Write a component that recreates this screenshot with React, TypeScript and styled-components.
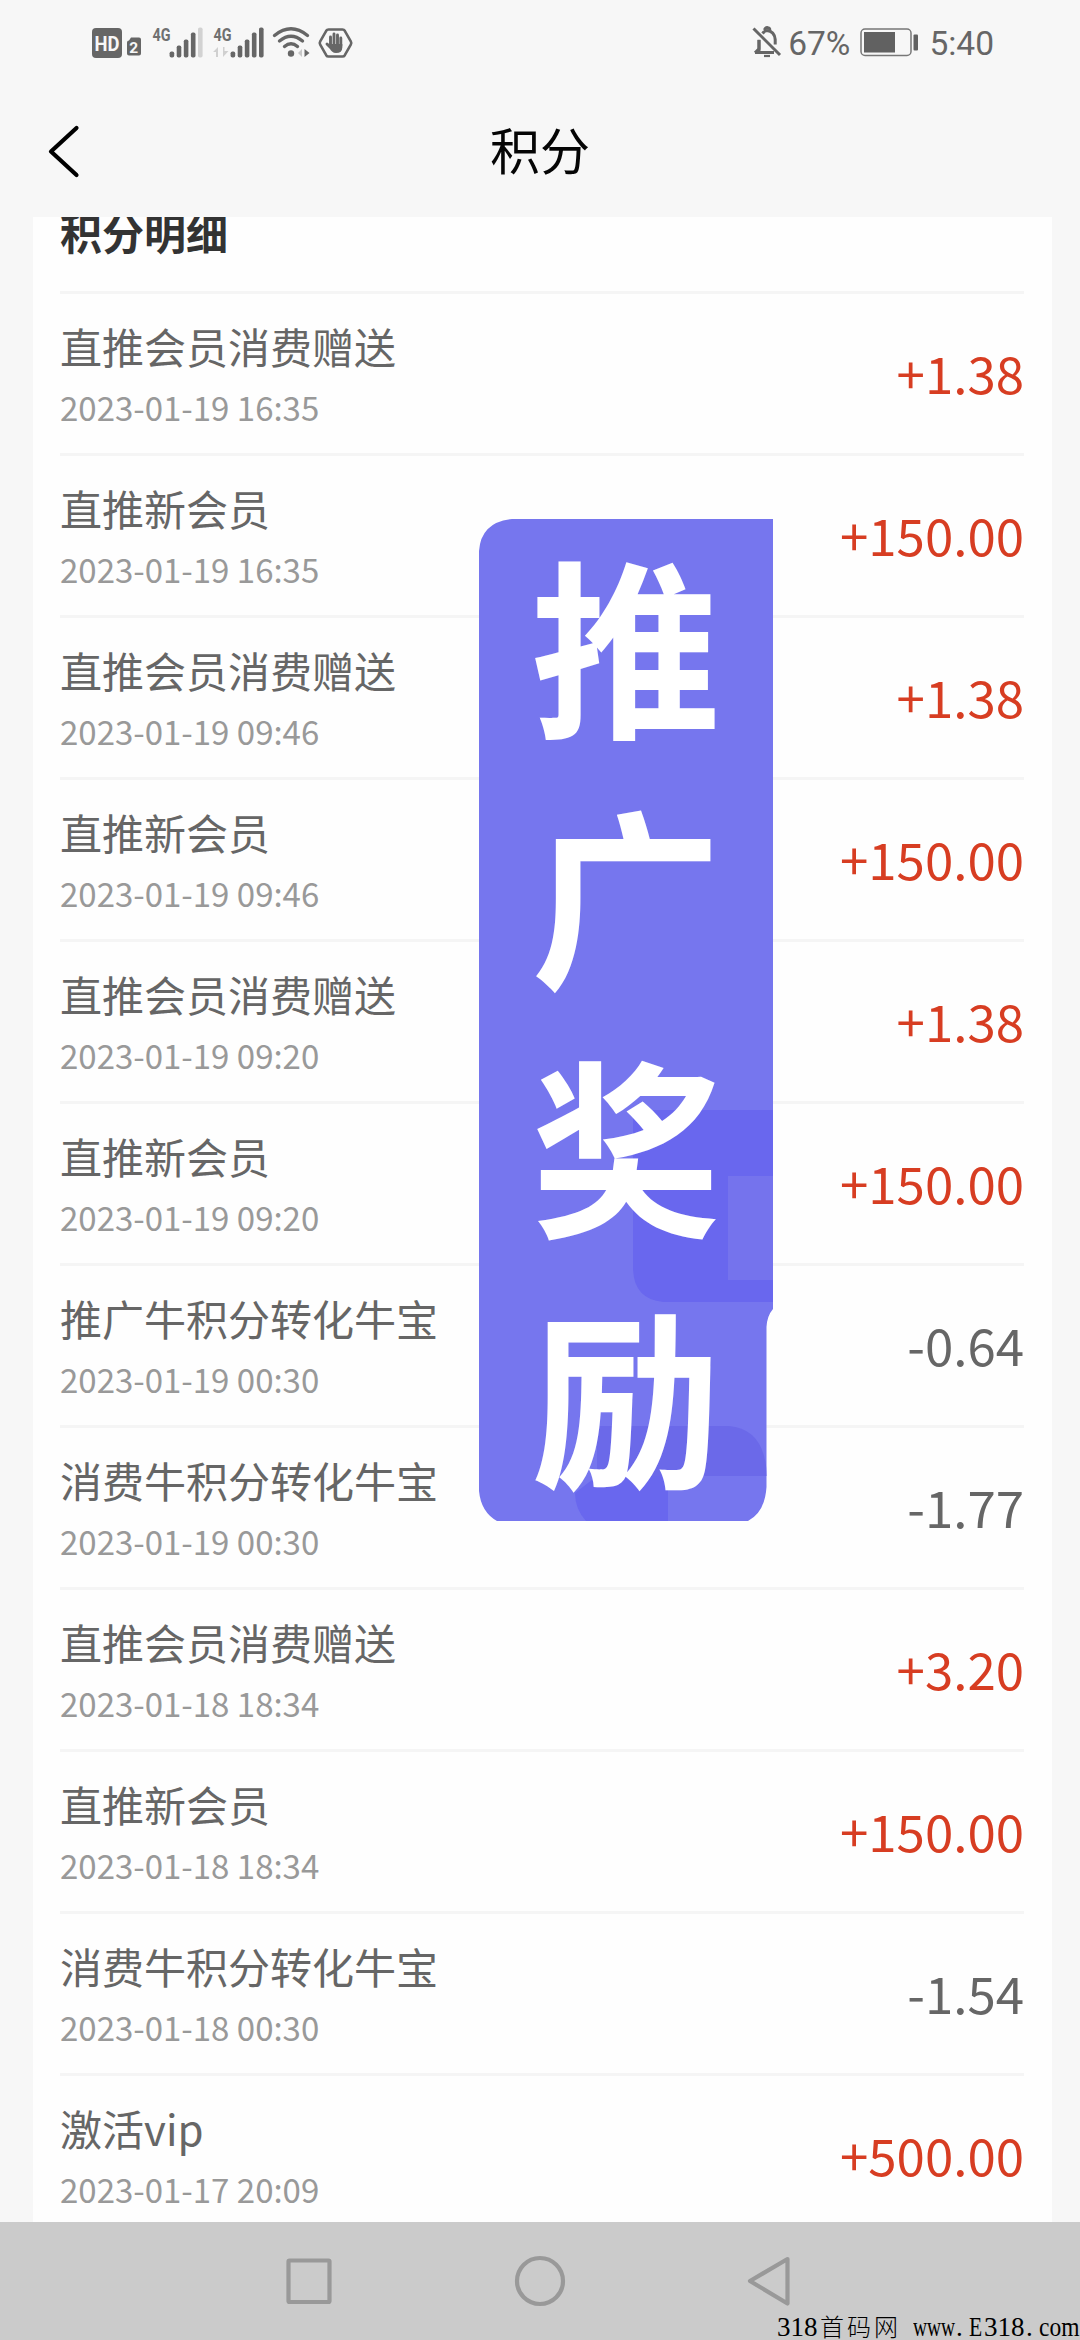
import React from "react";
import styled, { createGlobalStyle } from "styled-components";

const GlobalStyle = createGlobalStyle`
  * { box-sizing: border-box; }
  html, body { margin: 0; padding: 0; background: #f7f7f7; }
  body { font-family: "Noto Sans CJK SC", sans-serif; }
`;

const Screen = styled.div`
  position: relative;
  display: flex;
  flex-direction: column;
  width: 1080px;
  height: 2340px;
  overflow: hidden;
  background: #f7f7f7;
`;

const StatusBar = styled.div`
  display: flex;
  justify-content: space-between;
  height: 86px;
  padding: 15px 86px 0 80px;
  flex: none;
`;

const StatusIcons = styled.svg`
  display: block;
  width: 280px;
  height: 60px;
`;

const StatusRight = styled.div`
  display: flex;
  height: 60px;
  align-items: flex-start;
`;

const StatusText = styled.span<{ $gap: number }>`
  margin-left: ${(p) => p.$gap}px;
  font: 400 33.5px/58px Roboto, sans-serif;
  color: #666;
  white-space: nowrap;
`;

const BellIcon = styled.svg`
  width: 30px;
  height: 60px;
`;

const BatteryIcon = styled.svg`
  width: 58px;
  height: 60px;
  margin-left: 10px;
`;

const NavBar = styled.header`
  display: grid;
  grid-template-columns: 120px 1fr 120px;
  align-items: start;
  height: 131px;
  flex: none;
`;

const BackIcon = styled.svg`
  display: block;
  width: 36px;
  height: 56px;
  margin: 37px 0 0 46px;
`;

const PageTitle = styled.h1`
  margin: 0;
  font-size: 50px;
  line-height: 124px;
  font-weight: 400;
  text-align: center;
  color: #050505;
`;

const Card = styled.main`
  display: flex;
  flex-direction: column;
  flex: 1;
  margin: 0 28px 0 33px;
  padding: 0 28px 0 27px;
  overflow: hidden;
  background: #fefefe;
`;

const SectionTitle = styled.h2`
  margin: -19px 0 0;
  height: 93px;
  font-size: 42px;
  line-height: 68px;
  font-weight: 700;
  color: #333;
  flex: none;
`;

const Row = styled.div`
  display: flex;
  justify-content: space-between;
  align-items: center;
  height: 162px;
  flex: none;
  border-top: 3px solid #f5f5f5;
`;

const RowInfo = styled.div`
  display: flex;
  flex-direction: column;
`;

const RowName = styled.span`
  font-size: 42px;
  line-height: 60px;
  color: #666;
`;

const RowDate = styled.span`
  font-size: 33px;
  line-height: 48px;
  margin-top: 7px;
  color: #999;
`;

const Amount = styled.span<{ $gain: boolean }>`
  font-size: 51px;
  line-height: 74px;
  padding-bottom: 3px;
  color: ${(p) => (p.$gain ? "#d73d22" : "#666")};
`;

const Banner = styled.div`
  position: absolute;
  left: 479px;
  top: 519px;
  width: 294px;
  height: 1002px;
`;

const BannerArt = styled.svg`
  display: block;
  width: 294px;
  height: 1002px;
`;

const BannerText = styled.div`
  position: absolute;
  inset: -3px 0 0;
  display: flex;
  flex-direction: column;
  padding-left: 52px;
`;

const BannerChar = styled.span`
  font-size: 190px;
  line-height: 250px;
  height: 250px;
  font-weight: 700;
  color: #fff;
`;

const SystemBar = styled.footer`
  display: flex;
  justify-content: center;
  height: 118px;
  flex: none;
  background: #cbcbcb;
`;

const SystemIcons = styled.svg`
  display: block;
  width: 600px;
  height: 118px;
`;

const Watermark = styled.div`
  position: absolute;
  left: 777px;
  top: 2314px;
  display: flex;
  height: 26px;
  color: #000;
  white-space: nowrap;
`;

const MarkRun = styled.span<{ $w: number; $sx?: number }>`
  width: ${(p) => p.$w}px;
  font: 400 27px/26px "Liberation Serif", serif;
  transform: scaleX(${(p) => p.$sx ?? 1});
  transform-origin: left center;
`;

const MarkHan = styled.span`
  width: 85px;
  padding-left: 2px;
  font: 300 24px/23px "Noto Sans CJK SC", sans-serif;
  letter-spacing: 3px;
`;

const records: { name: string; date: string; amount: string }[] = [
  { name: "直推会员消费赠送", date: "2023-01-19 16:35", amount: "+1.38" },
  { name: "直推新会员", date: "2023-01-19 16:35", amount: "+150.00" },
  { name: "直推会员消费赠送", date: "2023-01-19 09:46", amount: "+1.38" },
  { name: "直推新会员", date: "2023-01-19 09:46", amount: "+150.00" },
  { name: "直推会员消费赠送", date: "2023-01-19 09:20", amount: "+1.38" },
  { name: "直推新会员", date: "2023-01-19 09:20", amount: "+150.00" },
  { name: "推广牛积分转化牛宝", date: "2023-01-19 00:30", amount: "-0.64" },
  { name: "消费牛积分转化牛宝", date: "2023-01-19 00:30", amount: "-1.77" },
  { name: "直推会员消费赠送", date: "2023-01-18 18:34", amount: "+3.20" },
  { name: "直推新会员", date: "2023-01-18 18:34", amount: "+150.00" },
  { name: "消费牛积分转化牛宝", date: "2023-01-18 00:30", amount: "-1.54" },
  { name: "激活vip", date: "2023-01-17 20:09", amount: "+500.00" },
];

function SignalBars({ x, dimLast }: { x: number; dimLast?: boolean }) {
  const heights = [6, 12, 18, 25, 30];
  return (
    <g>
      {heights.map((h, i) => (
        <rect
          key={i}
          x={x + i * 7.1}
          y={42.5 - h}
          width="4.6"
          height={h}
          rx="1.8"
          fill={dimLast && i === 4 ? "#d2d2d2" : "#666"}
        />
      ))}
    </g>
  );
}

function LeftStatus() {
  return (
    <StatusIcons viewBox="0 0 280 60">
      <rect x="12" y="13" width="30" height="30" rx="4" fill="#666" />
      <text x="27" y="35.5" fontFamily="Roboto, sans-serif" fontSize="20.5" fontWeight="700" fill="#f7f7f7" textAnchor="middle" textLength="25" lengthAdjust="spacingAndGlyphs">HD</text>
      <path d="M47 27.500a2 2 0 0 1 2-2l2-3h8a2 2 0 0 1 2 2v14a2 2 0 0 1-2 2H49a2 2 0 0 1-2-2z" fill="#666" />
      <text x="53.600" y="37.500" fontFamily="Roboto, sans-serif" fontSize="15.500" fontWeight="700" fill="#f7f7f7" textAnchor="middle">2</text>
      <text x="72.500" y="25.500" fontFamily="Roboto, sans-serif" fontSize="19" fontWeight="700" fill="#707070" textLength="18" lengthAdjust="spacingAndGlyphs">4G</text>
      <SignalBars x={89.6} dimLast />
      <text x="133.500" y="25.500" fontFamily="Roboto, sans-serif" fontSize="19" fontWeight="700" fill="#707070" textLength="18" lengthAdjust="spacingAndGlyphs">4G</text>
      <path d="M133 37l5-5v10h-2v-5zM143 42V32h1.500v4h4z" fill="#d0d0d0" />
      <SignalBars x={150.6} />
      <g fill="none" stroke="#666" strokeWidth="3.400" strokeLinecap="round">
        <path d="M194.500 20.500Q211 7 227.500 20.500" />
        <path d="M199.500 26Q211 16.500 222.500 26" />
        <path d="M204.500 31.500Q211 26 217.500 31.500" />
      </g>
      <circle cx="211" cy="38.500" r="3.200" fill="#666" />
      <path d="M222 34v8l-4-4z" fill="#c8c8c8" />
      <path d="M224.500 34l5 4-5 4z" fill="#666" />
      <path d="M248.500 14.500h14q1.500 0 2.300 1.300l6 10.500q1 1.700 0 3.400l-6 10.500q-.8 1.300-2.300 1.300h-14q-1.500 0-2.300-1.300l-6-10.500q-1-1.700 0-3.400l6-10.500q.8-1.300 2.300-1.300z" fill="none" stroke="#666" strokeWidth="2.600" />
      <g stroke="#666" strokeWidth="2.900" strokeLinecap="round" fill="none">
        <path d="M250.500 31v-9M254 30v-11M257.500 30v-10M260.800 31v-8M250 32l-3-3" />
      </g>
      <path d="M249 29h13.300v3.500q0 5.500-6.300 5.500-4.500 0-7-6z" fill="#666" />
    </StatusIcons>
  );
}

function RightStatus() {
  return (
    <StatusRight>
      <BellIcon viewBox="0 0 30 60" fill="none" stroke="#666" strokeWidth="3">
        <path d="M3 37.500h19M7 38V25M10.500 18.500Q13 15.500 15 15.500q7.500.8 8.200 9v5" />
        <path d="M3 37.800l4-4v-9M12.500 15q1-3 3.500-2.400 2 .4 1.800 2.800" />
        <path d="M1.500 13.500L28 40" />
        <path d="M12 41h6" strokeWidth="2.200" />
      </BellIcon>
      <StatusText $gap={6}>67%</StatusText>
      <BatteryIcon viewBox="0 0 58 60">
        <rect x="1" y="14" width="50" height="26.500" rx="4" fill="none" stroke="#777" strokeWidth="1.500" />
        <rect x="4" y="17" width="31" height="20.500" fill="#616161" />
        <rect x="53.500" y="19.500" width="4.500" height="16" rx="1" fill="#616161" />
      </BatteryIcon>
      <StatusText $gap={11}>5:40</StatusText>
    </StatusRight>
  );
}

function PromoBanner() {
  const outline =
    "M33 0H294V790Q288 797 287.500 808V968Q286 993 269 1002H18Q2 993 0 972V32Q2 3 33 0Z";
  return (
    <Banner>
      <BannerArt viewBox="0 0 294 1002">
        <defs>
          <clipPath id="bannerShape">
            <path d={outline} />
          </clipPath>
        </defs>
        <g clipPath="url(#bannerShape)">
          <rect width="294" height="1002" fill="#7676ee" />
          <path d="M154 591H294V783H184Q154 780 154 748Z" fill="#6967ee" />
          <rect x="249" y="657" width="45" height="104" fill="#7573ed" />
          <path d="M118 907H250Q286 910 288 957H118Z" fill="#6b69e9" />
          <path d="M118 957H189V1002H107Q96 990 96 974Z" fill="#6967ee" />
        </g>
      </BannerArt>
      <BannerText>
        {["推", "广", "奖", "励"].map((c) => (
          <BannerChar key={c}>{c}</BannerChar>
        ))}
      </BannerText>
    </Banner>
  );
}

export default function App() {
  return (
    <>
      <GlobalStyle />
      <Screen>
        <StatusBar>
          <LeftStatus />
          <RightStatus />
        </StatusBar>
        <NavBar>
          <BackIcon viewBox="0 0 36 56" fill="none" stroke="#000" strokeWidth="4.200" strokeLinecap="round" strokeLinejoin="round">
            <path d="M30.500 5L5 28.500L30.500 52" />
          </BackIcon>
          <PageTitle>积分</PageTitle>
        </NavBar>
        <Card>
          <SectionTitle>积分明细</SectionTitle>
          {records.map((r, i) => (
            <Row key={i}>
              <RowInfo>
                <RowName>{r.name}</RowName>
                <RowDate>{r.date}</RowDate>
              </RowInfo>
              <Amount $gain={r.amount.startsWith("+")}>{r.amount}</Amount>
            </Row>
          ))}
        </Card>
        <SystemBar>
          <SystemIcons viewBox="0 0 600 118" fill="none" stroke="#999" strokeWidth="4.200" strokeLinejoin="round">
            <rect x="48.500" y="38.500" width="41" height="41.500" rx="1" />
            <circle cx="300" cy="59" r="23" />
            <path d="M547.500 37L510 59L547.500 81.500Z" />
          </SystemIcons>
        </SystemBar>
        <PromoBanner />
        <Watermark>
          <MarkRun $w={41}>318</MarkRun>
          <MarkHan>首码网</MarkHan>
          <MarkRun $w={10} />
          <MarkRun $w={43} $sx={0.72}>www</MarkRun>
          <MarkRun $w={13}>.</MarkRun>
          <MarkRun $w={15} $sx={0.8}>E</MarkRun>
          <MarkRun $w={42}>318</MarkRun>
          <MarkRun $w={13}>.</MarkRun>
          <MarkRun $w={41} $sx={0.87}>com</MarkRun>
        </Watermark>
      </Screen>
    </>
  );
}
